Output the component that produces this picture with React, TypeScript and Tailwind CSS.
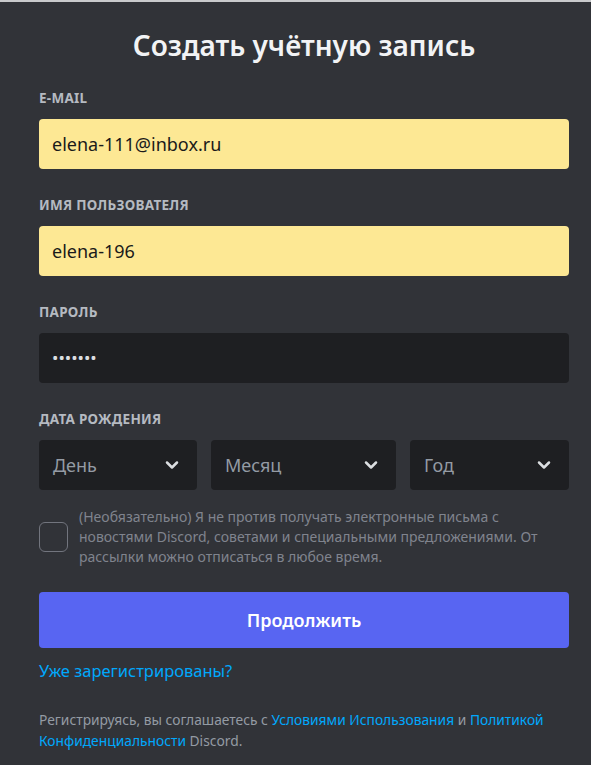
import { ChevronDown } from "lucide-react";

const Label = ({ children }: { children: React.ReactNode }) => (
  <label className="block text-[13.5px] leading-[18px] font-bold uppercase tracking-[0.02em] text-[#b5bac1] mb-[12px]">
    {children}
  </label>
);

const Select = ({ placeholder, width }: { placeholder: string; width: string }) => (
  <div
    className={`${width} h-[50px] rounded-[4px] bg-[#1e1f22] flex items-center justify-between pl-[14px] pr-[15px]`}
  >
    <span className="text-[18px] text-[#949ba4]">{placeholder}</span>
    <ChevronDown className="w-[20px] h-[20px] text-[#dbdee1]" strokeWidth={3} />
  </div>
);

export default function App() {
  return (
    <div
      className="min-h-screen bg-[#313338] border-t-2 border-[#c9cacc] pl-[39px] pr-[22px] pt-[26px]"
      style={{ fontFamily: '"Noto Sans", "Open Sans", sans-serif' }}
    >
      <h1 className="text-center text-[28px] font-semibold text-[#f2f3f5] leading-[34px]">
        Создать учётную запись
      </h1>

      <div className="mt-[27px]">
        <Label>E-mail</Label>
        <div className="h-[50px] rounded-[4px] bg-[#fde894] flex items-center px-[13px] text-[18px] text-[#1a1a1a]">
          elena-111@inbox.ru
        </div>
      </div>

      <div className="mt-[27px]">
        <Label>Имя пользователя</Label>
        <div className="h-[50px] rounded-[4px] bg-[#fde894] flex items-center px-[13px] text-[18px] text-[#1a1a1a]">
          elena-196
        </div>
      </div>

      <div className="mt-[27px]">
        <Label>Пароль</Label>
        <div className="h-[50px] rounded-[4px] bg-[#1e1f22] flex items-center px-[13px] text-[17px] text-[#dbdee1]">
          •••••••
        </div>
      </div>

      <div className="mt-[27px]">
        <Label>Дата рождения</Label>
        <div className="flex gap-[14px]">
          <Select placeholder="День" width="w-[158px]" />
          <Select placeholder="Месяц" width="w-[185px]" />
          <Select placeholder="Год" width="flex-1" />
        </div>
      </div>

      <div className="mt-[17px] flex items-center gap-[11px]">
        <div className="w-[29px] h-[30px] shrink-0 rounded-[6px] border border-[#72757e]" />
        <p className="text-[14px] leading-[20px] text-[#80848e]">
          (Необязательно) Я не против получать электронные письма с новостями Discord, советами и
          специальными предложениями. От рассылки можно отписаться в любое время.
        </p>
      </div>

      <button className="mt-[25px] w-full h-[56px] rounded-[4px] bg-[#5865f2] text-white text-[18px] font-semibold">
        Продолжить
      </button>

      <a className="block mt-[10px] text-[16.5px] leading-[26px] text-[#00a8fc]">Уже зарегистрированы?</a>

      <p className="mt-[25px] text-[13.8px] leading-[21px] text-[#949ba4]">
        Регистрируясь, вы соглашаетесь с <a className="text-[#00a8fc]">Условиями Использования</a> и{" "}
        <a className="text-[#00a8fc]">Политикой Конфиденциальности</a> Discord.
      </p>
    </div>
  );
}
